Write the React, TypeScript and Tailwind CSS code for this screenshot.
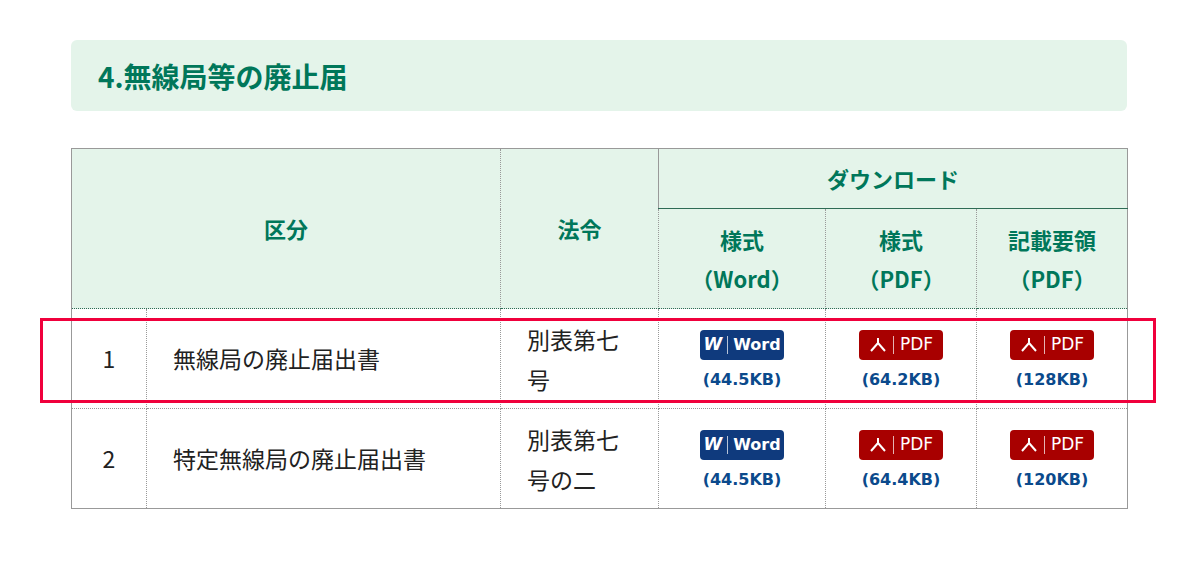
const font = { fontFamily: '"Noto Sans CJK JP", "Noto Sans", sans-serif' };

function WordBadge() {
  return (
    <span className="inline-flex h-[30px] w-[84px] items-center justify-center gap-[5px] rounded-[4px] bg-[#0f3a7d] text-[17px] font-bold leading-none text-white" style={{ fontFamily: '"DejaVu Sans", sans-serif' }}>
      <span className="italic">W</span>
      <span className="h-[18px] w-px bg-white/70" />
      <span className="text-[16px]">Word</span>
    </span>
  );
}

function PdfBadge() {
  return (
    <span className="inline-flex h-[30px] w-[84px] items-center justify-center gap-[6px] rounded-[4px] bg-[#a80000] text-[17px] leading-none text-white" style={{ fontFamily: '"DejaVu Sans", sans-serif' }}>
      <svg width="18" height="16" viewBox="0 0 18 16" fill="none" stroke="white" strokeWidth="2">
        <path d="M9 1 L9 6 L2 14 M9 6 L16 14" />
      </svg>
      <span className="h-[18px] w-px bg-white/70" />
      <span>PDF</span>
    </span>
  );
}

function Dl({ kind, size }: { kind: "w" | "p"; size: string }) {
  return (
    <td className="border border-dotted border-[#999] text-center align-middle">
      <div className="flex flex-col items-center gap-[8px] pt-[4px]">
        {kind === "w" ? <WordBadge /> : <PdfBadge />}
        <span className="text-[16px] font-bold text-[#0b4a8c]" style={{ fontFamily: '"DejaVu Sans", sans-serif' }}>{size}</span>
      </div>
    </td>
  );
}

const rows = [
  { n: "1", name: "無線局の廃止届出書", law: ["別表第七", "号"], s: ["(44.5KB)", "(64.2KB)", "(128KB)"] },
  { n: "2", name: "特定無線局の廃止届出書", law: ["別表第七", "号の二"], s: ["(44.5KB)", "(64.4KB)", "(120KB)"] },
];

export default function App() {
  return (
    <div className="relative h-[562px] w-[1194px] bg-white" style={font}>
      <div className="px-[71px] pt-[40px]">
        <div className="flex h-[71px] w-[1056px] items-center rounded-[6px] bg-[#e4f4ea] px-[27px]">
          <h2 className="text-[28px] font-bold text-[#00775a]">4.無線局等の廃止届</h2>
        </div>
        <table className="mt-[37px] w-[1056px] table-fixed border-collapse border border-solid border-[#999] text-[#222]">
          <colgroup>
            <col className="w-[75px]" />
            <col className="w-[354px]" />
            <col className="w-[158px]" />
            <col className="w-[167px]" />
            <col className="w-[151px]" />
            <col className="w-[151px]" />
          </colgroup>
          <thead className="bg-[#e4f4ea] text-[22px] font-bold text-[#00775a]">
            <tr className="h-[60px]">
              <th colSpan={2} rowSpan={2} className="border border-dotted border-[#999] border-b-[#2e6b55]">区分</th>
              <th rowSpan={2} className="border border-dotted border-[#999] border-b-[#2e6b55]">法令</th>
              <th colSpan={3} className="border border-solid border-[#999] border-b-[#2e6b55]">ダウンロード</th>
            </tr>
            <tr className="h-[100px] leading-[39px]">
              <th className="border border-dotted border-[#999] border-b-[#2e6b55]">様式<br />（Word）</th>
              <th className="border border-dotted border-[#999] border-b-[#2e6b55]">様式<br />（PDF）</th>
              <th className="border border-dotted border-[#999] border-b-[#2e6b55]">記載要領<br />（PDF）</th>
            </tr>
          </thead>
          <tbody className="text-[23px]">
            {rows.map((r) => (
              <tr key={r.n} className="h-[100px]">
                <td className="border border-dotted border-[#999] text-center">{r.n}</td>
                <td className="border border-dotted border-[#999] pl-[26px]">{r.name}</td>
                <td className="border border-dotted border-[#999] pl-[26px] leading-[40px]">
                  {r.law[0]}<br />{r.law[1]}
                </td>
                <Dl kind="w" size={r.s[0]} />
                <Dl kind="p" size={r.s[1]} />
                <Dl kind="p" size={r.s[2]} />
              </tr>
            ))}
          </tbody>
        </table>
      </div>
      <div className="pointer-events-none absolute left-[40px] top-[318px] h-[85px] w-[1116px] border-[3px] border-[#f0003c]" />
    </div>
  );
}
